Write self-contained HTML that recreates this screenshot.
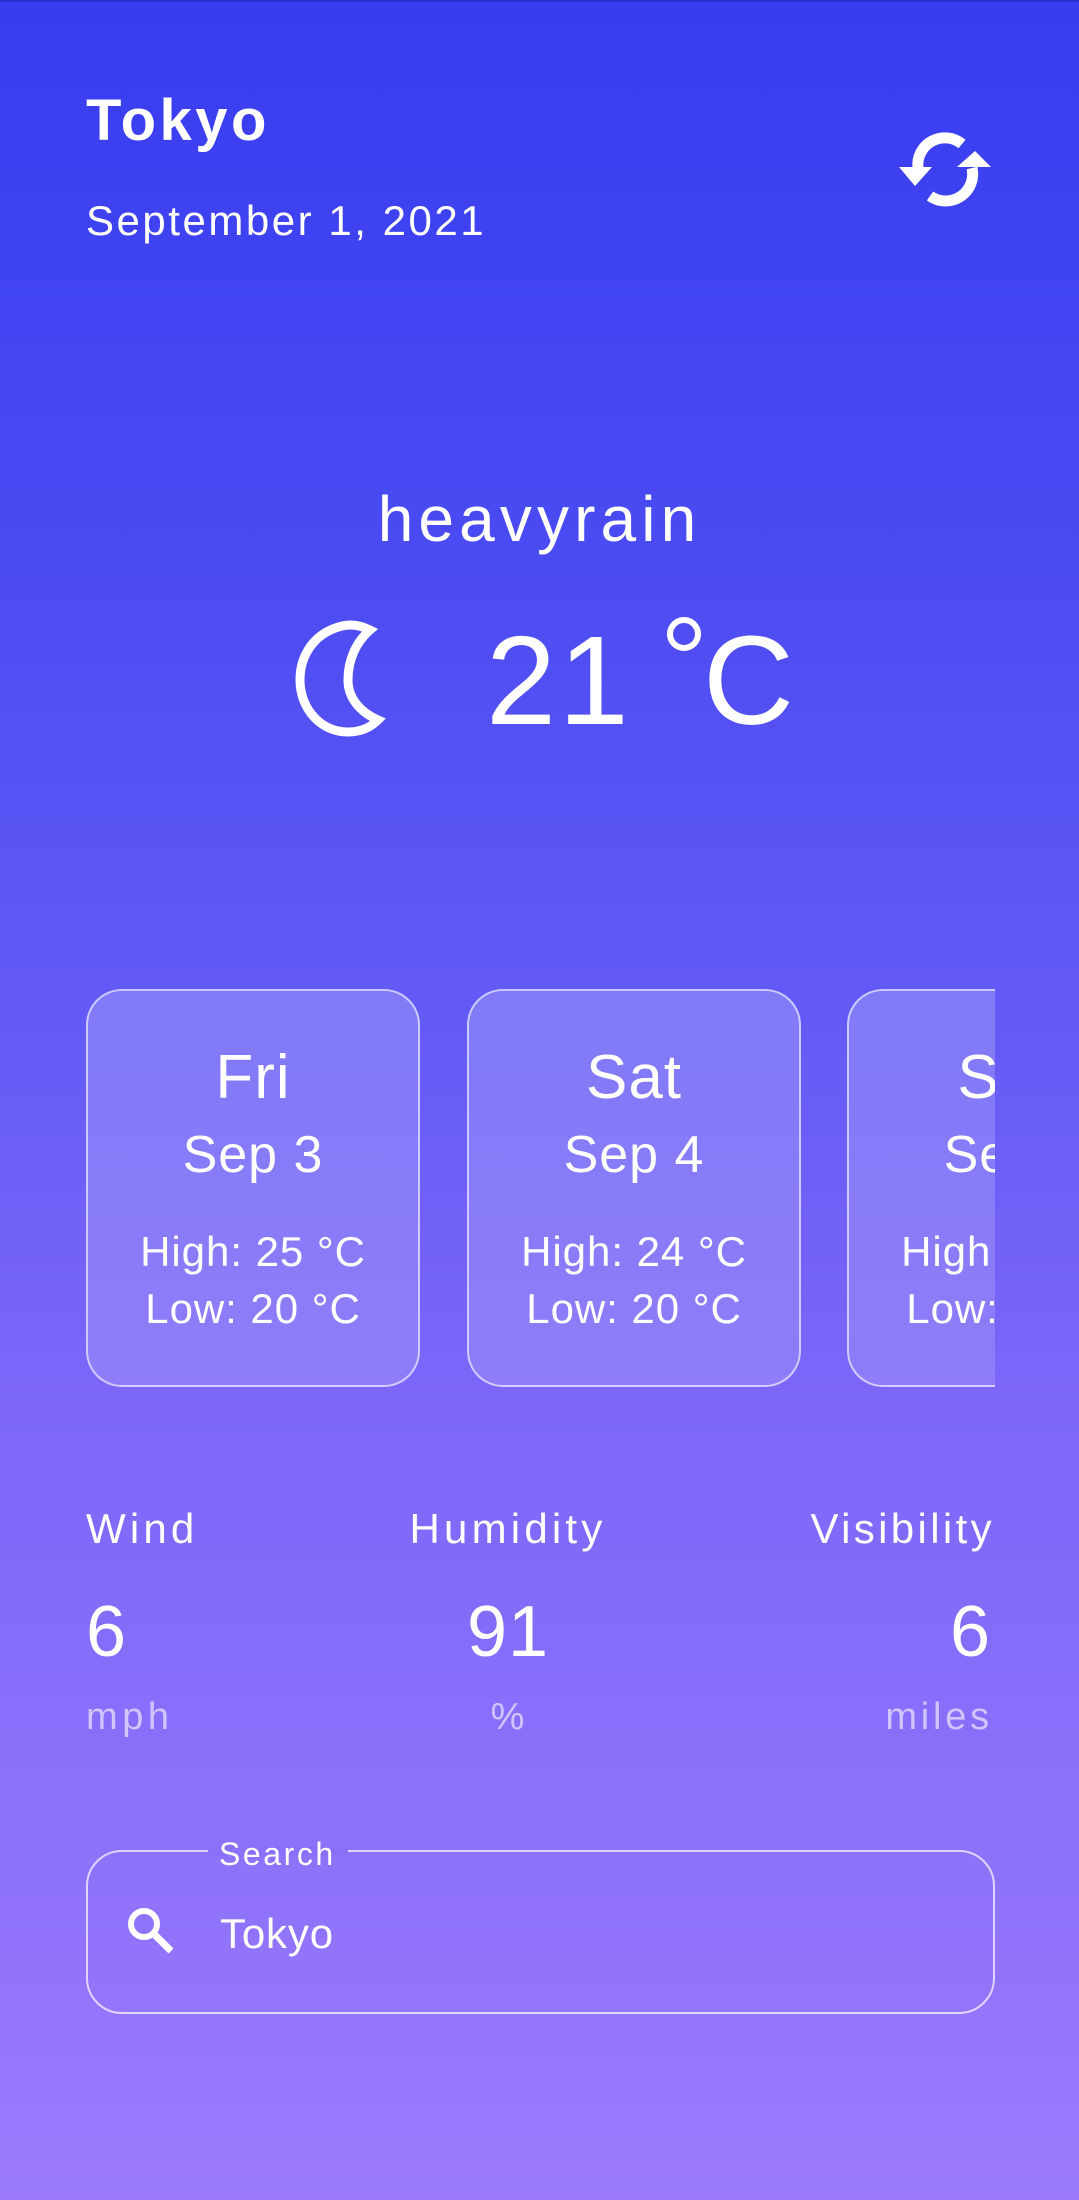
<!DOCTYPE html>
<html><head><meta charset="utf-8"><style>
html,body{margin:0;padding:0}
body{width:1079px;height:2200px;position:relative;overflow:hidden;font-family:"Liberation Sans",sans-serif;color:#fff;letter-spacing:0.06em;
background:linear-gradient(180deg,#373cef 0%,#4a4bf2 25%,#6259f6 45%,#7a66f8 62%,#8a6ffa 80%,#9b7afc 100%);}
.a{position:absolute;white-space:nowrap;line-height:1}
.card{position:absolute;top:989px;width:334px;height:398px;border:2px solid rgba(255,255,255,.6);border-radius:36px;background:linear-gradient(180deg,rgba(255,255,255,.2),rgba(255,255,255,.15));box-sizing:border-box;overflow:hidden}
.card div{position:absolute;left:0;right:0;text-align:center;line-height:1}
</style></head><body>
<div style="position:absolute;top:0;left:0;right:0;height:2px;background:#2a2fd0"></div>
<div class="a" style="left:86px;top:92px;font-size:58px;font-weight:bold;letter-spacing:0.06em">Tokyo</div>
<div class="a" style="left:86px;top:200px;font-size:42px;letter-spacing:0.06em">September 1, 2021</div>
<svg class="a" style="left:0;top:0" width="1079" height="300" viewBox="0 0 1079 300">
<path d="M962 144 A27 27 0 0 0 918 168" fill="none" stroke="#fff" stroke-width="11"/>
<path d="M972 168 A27 27 0 0 1 930 196" fill="none" stroke="#fff" stroke-width="11"/>
<polygon points="899,167 932,167 915,186" fill="#fff"/>
<polygon points="957,167 991,167 975,151" fill="#fff"/>
</svg>
<div class="a" style="left:0;width:1079px;text-align:center;top:487px;font-size:64px;letter-spacing:0.08em">heavyrain</div>
<svg class="a" style="left:290px;top:620px" width="110" height="120" viewBox="0 0 110 120">
<path d="M52 6 C20 14 10 40 10 60 C10 88 30 112 58 112 C70 112 80 108 88 100 C70 92 58 78 58 60 C58 40 66 22 80 10 C70 5 60 4 52 6 Z" fill="none" stroke="#fff" stroke-width="9" stroke-linejoin="miter"/>
</svg>
<div class="a" style="left:486px;top:618px;font-size:126px;letter-spacing:0.02em">21</div>
<svg class="a" style="left:660px;top:610px" width="50" height="50"><circle cx="24" cy="24" r="14" fill="none" stroke="#fff" stroke-width="6"/></svg>
<div class="a" style="left:703px;top:618px;font-size:126px;letter-spacing:0">C</div>
<div class="card" style="left:86px"><div style="top:56px;font-size:62px">Fri</div><div style="top:138px;font-size:52px">Sep 3</div><div style="top:240px;font-size:42px">High: 25 °C</div><div style="top:297px;font-size:42px">Low: 20 °C</div></div>
<div class="card" style="left:467px"><div style="top:56px;font-size:62px">Sat</div><div style="top:138px;font-size:52px">Sep 4</div><div style="top:240px;font-size:42px">High: 24 °C</div><div style="top:297px;font-size:42px">Low: 20 °C</div></div>
<div style="position:absolute;left:847px;top:989px;width:148px;height:398px;overflow:hidden">
<div class="card" style="left:0;top:0"><div style="top:56px;font-size:62px">Sun</div><div style="top:138px;font-size:52px">Sep 5</div><div style="top:240px;font-size:42px">High: 24 °C</div><div style="top:297px;font-size:42px">Low: 20 °C</div></div></div>
<div class="a" style="left:86px;top:1508px;font-size:42px;letter-spacing:0.1em">Wind</div>
<div class="a" style="left:358px;width:300px;text-align:center;top:1508px;font-size:42px;letter-spacing:0.1em">Humidity</div>
<div class="a" style="right:84px;top:1508px;font-size:42px;letter-spacing:0.08em">Visibility</div>
<div class="a" style="left:86px;top:1596px;font-size:72px">6</div>
<div class="a" style="left:358px;width:300px;text-align:center;top:1596px;font-size:72px">91</div>
<div class="a" style="right:88px;top:1596px;font-size:72px">6</div>
<div class="a" style="left:86px;top:1698px;font-size:38px;letter-spacing:0.12em;color:rgba(255,255,255,.6)">mph</div>
<div class="a" style="left:358px;width:300px;text-align:center;top:1698px;font-size:38px;color:rgba(255,255,255,.6)">%</div>
<div class="a" style="right:86px;top:1698px;font-size:38px;letter-spacing:0.1em;color:rgba(255,255,255,.6)">miles</div>
<div style="position:absolute;left:86px;top:1850px;width:909px;height:164px;box-sizing:border-box;border:2px solid rgba(255,255,255,.7);border-radius:36px"></div>
<div style="position:absolute;left:208px;top:1846px;width:140px;height:10px;background:#8a6ffa"></div>
<div class="a" style="left:219px;top:1838px;font-size:32px;letter-spacing:0.08em">Search</div>
<svg class="a" style="left:120px;top:1900px" width="60" height="60" viewBox="0 0 60 60">
<circle cx="24" cy="24" r="13" fill="none" stroke="#fff" stroke-width="6"/>
<line x1="33" y1="33" x2="51" y2="51" stroke="#fff" stroke-width="7"/>
</svg>
<div class="a" style="left:220px;top:1913px;font-size:42px;letter-spacing:0.02em">Tokyo</div>
</body></html>
